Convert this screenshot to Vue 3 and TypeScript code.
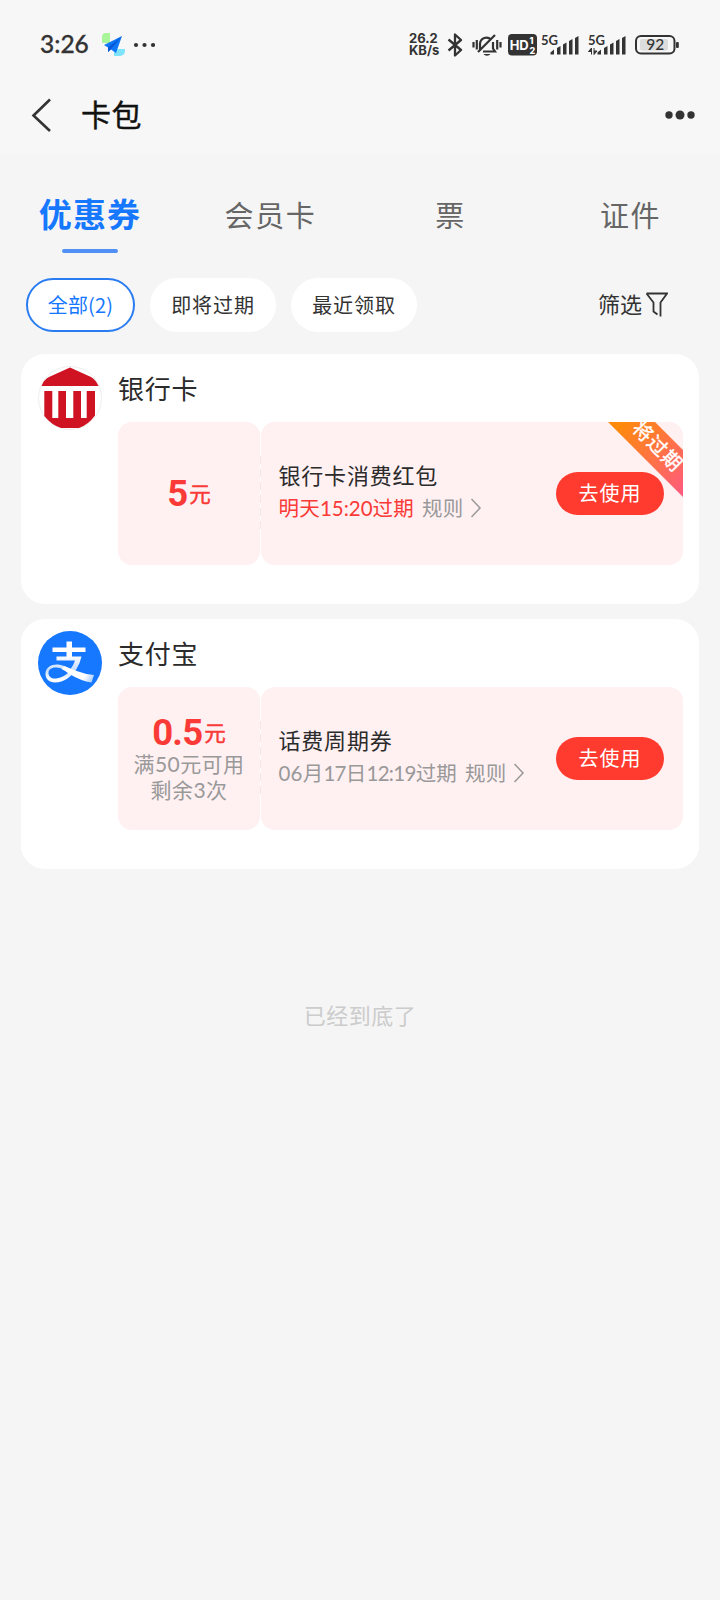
<script setup lang="ts">
interface Coupon {
  id: string
  brand: string
  amount: string
  conditions: string[]
  title: string
  expiry: string[]
  urgent: boolean
}

const tabs: string[] = ['优惠券', '会员卡', '票', '证件']
const chips: string[] = ['全部(2)', '即将过期', '最近领取']
const coupons: Coupon[] = [
  {
    id: 'bank',
    brand: '银行卡',
    amount: '5',
    conditions: [],
    title: '银行卡消费红包',
    expiry: ['明天', '15:20', '过期'],
    urgent: true,
  },
  {
    id: 'alipay',
    brand: '支付宝',
    amount: '0.5',
    conditions: ['满50元可用', '剩余3次'],
    title: '话费周期券',
    expiry: ['06', '月', '17', '日', '12:19', '过期'],
    urgent: false,
  },
]

const isNarrow = (part: string): boolean => /^1/.test(part)
</script>

<template>
  <main class="screen">
    <header class="top">
      <div class="status">
        <span class="clock">3:26</span>
        <svg class="app-icon" width="24" height="24" viewBox="0 0 24 24">
          <path d="M1 4a4 4 0 0 1 4-4h4v10H1z" fill="#a9f59a" />
          <path d="M13 16h11v2a5 5 0 0 1-5 5h-6z" fill="#7fe3fb" />
          <path d="M21 3 3 12l4 2.500V19l3-2.500L15 20z" fill="#0f76f5" />
          <path d="M21 3 7 14.500V19l3-3z" fill="#0558d8" />
        </svg>
        <svg class="more-small" width="22" height="6" viewBox="0 0 22 6">
          <circle cx="3" cy="3" r="2.100" /><circle cx="11.500" cy="3" r="2.100" /><circle cx="20" cy="3" r="2.100" />
        </svg>
        <div class="speed"><span>26.2</span><span>KB/s</span></div>
        <svg class="bluetooth" width="16" height="24" viewBox="0 0 16 24">
          <path d="M1.500 6.500 14 17l-6 5.500v-21L14 7 1.500 17.500" fill="none" stroke="#333" stroke-width="2.300" stroke-linejoin="round" />
        </svg>
        <svg class="bell" width="30" height="26" viewBox="0 0 30 26" fill="none" stroke="#333" stroke-width="2.200">
          <path d="M8 17.500V10.500a6.500 6.500 0 0 1 11-4M21 9v6.500l2 3H11M6 19 23 2M1.500 9v5.500M4.800 7v9.500M25.200 7v9.500M28.500 9v5.500" />
          <path d="M11.500 21h7a4 3.500 0 0 1-7 0z" fill="#333" stroke="none" />
        </svg>
        <svg class="hd" width="30" height="22" viewBox="0 0 30 22">
          <rect x="0" y="0" width="29" height="21.500" rx="4" fill="#333" />
          <text x="1.800" y="16" class="hd-text">HD</text>
          <text x="21.500" y="10" class="hd-num">1</text>
          <text x="21.500" y="19.500" class="hd-num">2</text>
        </svg>
        <svg v-for="n in 2" :key="n" class="signal" :class="{ second: n === 2 }" width="40" height="24" viewBox="0 -2 40 24">
          <text x="0" y="10.500" class="net">5G</text>
          <path v-if="n === 2" d="M3.500 20.500v-6.500L.5 17.500h3M6 14v6.500l3-3.500H6" fill="#333" stroke="#333" stroke-width="1" />
          <path d="M9.500 20.500v-2l3.500-3v5z" />
          <path d="M16 20.500v-6.500l3.500-2v8.500zM22 20.500V10.500l3.500-2v12zM28 20.500V7l3.500-2v15.500zM34 20.500V4l3.500-2v18.500z" />
        </svg>
        <svg class="battery" width="46" height="20" viewBox="0 0 46 20">
          <rect x="1" y="1" width="38.500" height="17.500" rx="5" fill="none" stroke="#333" stroke-width="2" />
          <rect x="5" y="4" width="28" height="11.500" rx="2" fill="#dcdcdc" />
          <rect x="41" y="7" width="2.800" height="6" rx="1" fill="#333" />
          <text x="20.200" y="15.200" text-anchor="middle" class="battery-text">92</text>
        </svg>
      </div>
      <nav class="nav">
        <svg width="20" height="34" viewBox="0 0 20 34">
          <path d="M19 1.500 2.500 17.500 19 33" fill="none" stroke="#333" stroke-width="2.600" />
        </svg>
        <h1>卡包</h1>
        <svg class="menu" width="30" height="10" viewBox="0 0 30 10">
          <circle cx="4" cy="5" r="3.700" /><circle cx="15" cy="5" r="4.500" /><circle cx="26" cy="5" r="3.700" />
        </svg>
      </nav>
    </header>

    <div class="tabs">
      <div v-for="(tab, i) in tabs" :key="tab" class="tab" :class="{ active: i === 0 }"><span>{{ tab }}</span></div>
    </div>

    <div class="filters">
      <span v-for="(chip, i) in chips" :key="chip" class="chip" :class="{ active: i === 0 }">{{ chip }}</span>
      <span class="filter">筛选</span>
      <svg width="23" height="26" viewBox="0 0 23 26">
        <path d="M1.500 1.500h20.500l-6.500 9V24.500M1.500 1.500l7 9V19.500l4 3" fill="none" stroke="#333" stroke-width="1.800" />
      </svg>
    </div>

    <section v-for="coupon in coupons" :key="coupon.id" class="card">
      <svg v-if="coupon.id === 'bank'" class="logo" width="64" height="64" viewBox="0 0 64 64">
        <circle cx="32" cy="32" r="31.500" fill="#fff" stroke="#eee" />
        <path d="M32 1.500 53 11q4.500 2.500 7.500 9h-57Q6 13.500 11 11z" fill="#cf1322" />
        <path d="M6.300 25h8v27h6V25H28v27h7.300V25H43v27h5.700V25H57v24.500Q50 59 41 62H23Q13.500 59 6.300 50z" fill="#cf1322" />
      </svg>
      <svg v-else class="logo" width="64" height="64" viewBox="0 0 64 64">
        <defs>
          <linearGradient id="stroke-fade" x1="34" y1="36" x2="56" y2="50" gradientUnits="userSpaceOnUse">
            <stop offset="0" stop-color="#fff" />
            <stop offset=".6" stop-color="#fff" />
            <stop offset="1" stop-color="#9cc4ff" />
          </linearGradient>
          <linearGradient id="sweep-fade" x1="0" y1="24" x2="0" y2="49" gradientUnits="userSpaceOnUse">
            <stop offset="0" stop-color="#fff" />
            <stop offset=".6" stop-color="#c5dcff" />
            <stop offset="1" stop-color="#fff" />
          </linearGradient>
        </defs>
        <circle cx="32" cy="32" r="32" fill="#1677ff" />
        <path d="M14.500 16.500h14V10.500h5.500v6h13.500V21H34v4.500h9.500q-1.500 7-5 12.500C33 46 26 51.500 17 51.500 11 51.500 7 47.500 7.500 42 8 36.500 13.500 33 20 33.500c4 .3 8 2 12.500 4.500Q35.500 34.500 37 29.500H18.500v-4h10V21H14.500z" fill="url(#sweep-fade)" />
        <path d="M30.500 41.500q-5.500-4.500-12-5c-5-.3-8 2-8 5.500 0 3.800 3.500 6 7.500 5.500 5-.5 9-3 12.500-6z" fill="#1677ff" />
        <path d="M26 35q6 2.500 13.500 5.300 8 3.200 16.500 3.700l-2.500 7.500Q43 50 30.500 42.500q-3-3-7-4.500z" fill="url(#stroke-fade)" />
      </svg>
      <div class="content">
        <h2>{{ coupon.brand }}</h2>
        <div class="coupon">
          <div class="value">
            <p class="amount"><b>{{ coupon.amount }}</b><span>元</span></p>
            <p v-for="line in coupon.conditions" :key="line" class="condition">{{ line }}</p>
          </div>
          <i class="divider"></i>
          <div class="detail">
            <div class="info">
              <h3>{{ coupon.title }}</h3>
              <p class="meta">
                <span :class="{ urgent: coupon.urgent }"><span v-for="(part, i) in coupon.expiry" :key="i" :class="{ narrow: isNarrow(part) }">{{ part }}</span></span>
                <span class="rule">规则</span>
                <svg width="12" height="20" viewBox="0 0 12 20">
                  <path d="m1.500 1 8.500 9-8.500 9" fill="none" stroke="#999" stroke-width="1.500" />
                </svg>
              </p>
            </div>
            <button type="button">去使用</button>
            <svg v-if="coupon.urgent" class="ribbon" width="75" height="76" viewBox="0 0 75 76">
              <defs>
                <linearGradient id="ribbon-fill" x1="0" y1="0" x2="1" y2="1">
                  <stop offset=".1" stop-color="#ff8a0c" />
                  <stop offset="1" stop-color="#ff5a80" />
                </linearGradient>
              </defs>
              <path d="M0 0h47l28 28v47z" fill="url(#ribbon-fill)" />
              <text transform="translate(49.500 24.500) rotate(45)" x="0" y="6.800" text-anchor="middle" class="ribbon-text">将过期</text>
            </svg>
          </div>
        </div>
      </div>
    </section>

    <footer>已经到底了</footer>
  </main>
</template>

<style>
html,
body {
  background: #f5f5f5;
}
</style>

<style scoped>
.screen {
  box-sizing: border-box;
  width: 720px;
  height: 1600px;
  overflow: hidden;
  background: #f5f5f5;
  color: #333;
  font-family: Lato, "Noto Sans CJK SC", sans-serif;
}
h1, h2, h3, p {
  margin: 0;
  font-weight: 400;
}
svg {
  display: block;
  flex: none;
}
.top {
  height: 154px;
  background: #f7f7f7;
}
.status {
  display: flex;
  align-items: flex-start;
  box-sizing: border-box;
  height: 76px;
  padding: 33px 0 0 40px;
  fill: #333;
}
.clock {
  width: 61px;
  font-size: 24.5px;
  line-height: 22px;
  font-weight: 500;
  -webkit-text-stroke: 0.3px #333;
}
.more-small {
  margin: 9px 0 0 8px;
}
.speed {
  display: flex;
  flex-direction: column;
  gap: 1px;
  width: 38px;
  margin-left: 254px;
  font: 700 13px/11px Inter, sans-serif;
}
.bell {
  margin-left: 9px;
}
.hd {
  margin: 1px 0 0 6px;
}
.hd-text {
  fill: #fff;
  font: 700 13px Inter, sans-serif;
  letter-spacing: -0.3px;
}
.hd-num {
  fill: #fff;
  font: 800 9px Inter, sans-serif;
}
.signal {
  margin: -1px 0 0 3px;
}
.signal.second {
  margin-left: 7px;
}
.net {
  font: 700 13px Lato, sans-serif;
}
.battery {
  margin: 2px 0 0 7px;
}
.battery-text {
  font: 500 15.5px Lato, sans-serif;
}
.nav {
  display: flex;
  align-items: center;
  height: 78px;
  padding: 0 25px 0 31px;
}
.nav h1 {
  margin: -4px 0 0 30px;
  color: #111;
  font: 400 30px/40px "Noto Sans CJK SC", sans-serif;
  letter-spacing: 0.6px;
  -webkit-text-stroke: 0.4px #111;
}
.menu {
  margin-left: auto;
  fill: #333;
}
.tabs {
  display: grid;
  grid-template-columns: repeat(4, 180px);
  height: 124px;
  font-family: "Noto Sans CJK SC", sans-serif;
}
.tab {
  display: flex;
  flex-direction: column;
  align-items: center;
  padding: 38px 0 0 1px;
  color: #666;
  font-size: 29px;
  line-height: 44px;
  letter-spacing: 1.6px;
}
.tab.active {
  padding: 37px 0 0;
  color: #1677ff;
  font-size: 33px;
  font-weight: 700;
  letter-spacing: 1.2px;
}
.tab.active::after {
  content: "";
  width: 56px;
  height: 4px;
  margin-top: 14px;
  border-radius: 2px;
  background: #508ff4;
}
.filters {
  display: flex;
  align-items: center;
  gap: 15px;
  height: 54px;
  padding: 0 52px 0 26px;
  font-family: "Noto Sans CJK SC", sans-serif;
}
.chip {
  box-sizing: border-box;
  width: 126px;
  height: 54px;
  border-radius: 27px;
  background: #fff;
  font-size: 20px;
  line-height: 53px;
  letter-spacing: 0.9px;
  text-align: center;
}
.chip.active {
  width: 109px;
  border: 2px solid #2a7cf2;
  color: #1677ff;
  line-height: 49px;
  letter-spacing: 0.2px;
}
.filter {
  margin-left: auto;
  margin-right: -12px;
  font-size: 22px;
  line-height: 50px;
  height: 54px;
}
.card {
  display: flex;
  box-sizing: border-box;
  width: 678px;
  height: 250px;
  margin: 22px 0 0 21px;
  padding: 12px 16px 0 17px;
  border-radius: 24px;
  background: #fff;
}
.card + .card {
  margin-top: 15px;
}
.content {
  margin-left: 16px;
}
h2 {
  height: 56px;
  color: #2b2b2b;
  font: 400 26px/44px "Noto Sans CJK SC", sans-serif;
  letter-spacing: 0.8px;
}
.coupon {
  display: flex;
  height: 143px;
}
.value {
  display: flex;
  flex-direction: column;
  align-items: center;
  justify-content: center;
  box-sizing: border-box;
  width: 142px;
  padding-bottom: 2px;
  border-radius: 14px;
  background: #fff0f2;
}
.amount {
  display: flex;
  align-items: flex-start;
  height: 38px;
  color: #f93a36;
}
.amount b {
  font: 700 36.5px/40px Roboto, sans-serif;
  letter-spacing: -0.8px;
}
.amount span {
  margin-left: 2px;
  font: 400 21.5px/38px "Noto Sans CJK SC", sans-serif;
  -webkit-text-stroke: 0.5px #f93a36;
}
.condition {
  color: #999;
  font-size: 21px;
  line-height: 25.5px;
  letter-spacing: 0.4px;
}
.divider {
  width: 1px;
  height: 77px;
  margin: 34px 0 0;
  background: repeating-linear-gradient(#f3e6e8 0 8px, #fff 8px 13px);
}
.detail {
  position: relative;
  display: flex;
  align-items: center;
  justify-content: space-between;
  box-sizing: border-box;
  width: 422px;
  padding: 0 19px 0 17.5px;
  overflow: hidden;
  border-radius: 14px;
  background: #fff0f2;
}
h3 {
  color: #2b2b2b;
  font: 400 22px/32px "Noto Sans CJK SC", sans-serif;
  letter-spacing: 0.8px;
}
.info {
  margin-top: -3px;
}
.meta {
  display: flex;
  align-items: center;
  height: 36px;
  color: #999;
  font-size: 20.5px;
  line-height: 36px;
  letter-spacing: 0.2px;
}
.narrow {
  letter-spacing: -0.7px;
}
.urgent {
  color: #f93a36;
}
.urgent .narrow {
  letter-spacing: 0;
}
.rule {
  margin: 0 7px 0 8px;
}
button {
  width: 108px;
  height: 43px;
  padding: 0 0 1px;
  border: 0;
  border-radius: 22px;
  background: #ff3b30;
  color: #fff;
  font: 400 20px/42px "Noto Sans CJK SC", sans-serif;
  letter-spacing: 1px;
}
.ribbon {
  position: absolute;
  top: 0;
  right: 0;
  overflow: visible;
}
.ribbon-text {
  fill: #fff;
  stroke: #fff;
  stroke-width: 0.4px;
  font: 400 19.5px "Noto Sans CJK SC", sans-serif;
  letter-spacing: 1px;
}
footer {
  margin-top: 129px;
  color: #ccc;
  font: 400 22px/32px "Noto Sans CJK SC", sans-serif;
  letter-spacing: 0.5px;
  text-align: center;
}
</style>
